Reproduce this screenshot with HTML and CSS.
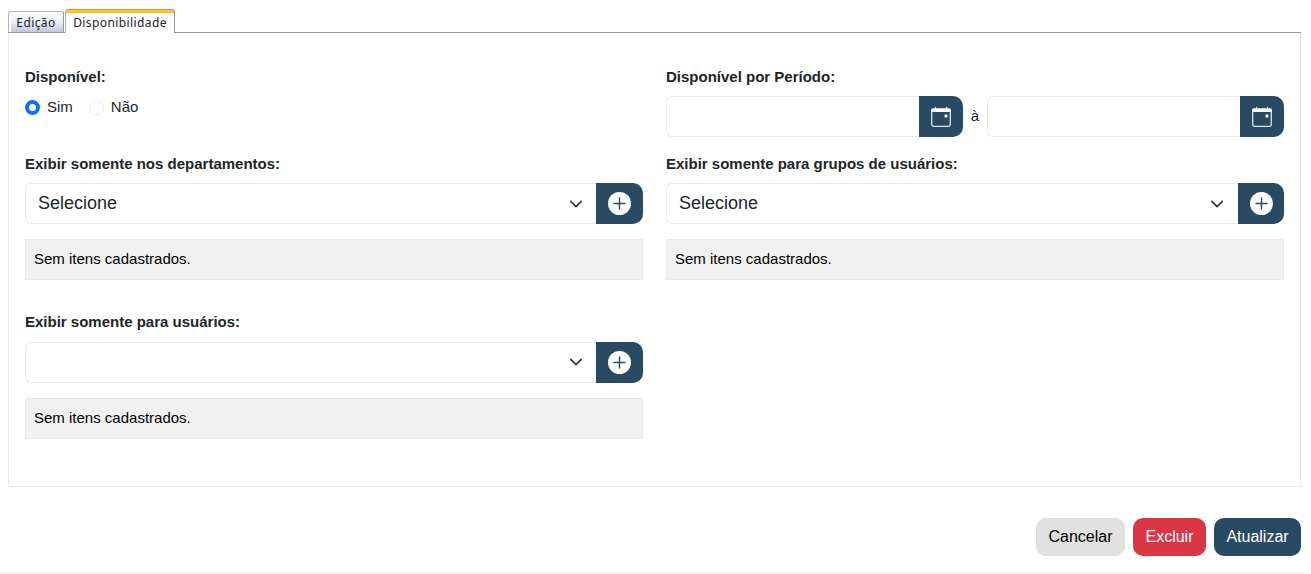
FILE: index.html
```html
<!DOCTYPE html>
<html lang="pt-br">
<head>
    <meta charset="UTF-8">
    <meta name="viewport" content="width=device-width, initial-scale=1.0">
    <title>Disponibilidade</title>
    <link rel="stylesheet" href="styles.css">
</head>
<body>

    <!-- Ícones reutilizados nos botões -->
    <svg class="icones" width="0" height="0">
        <symbol id="calendario" viewBox="0 0 20 22">
            <path d="M4.5 1v3M15.5 1v3" stroke="currentColor" stroke-width="1.2"/>
            <path d="M.7 5v13.6Q.7 20.4 2.5 20.4H17.5Q19.3 20.4 19.3 18.6V5" fill="none" stroke="currentColor" stroke-opacity=".85" stroke-width="1.3"/>
            <path d="M0 6V4Q0 2.2 1.8 2.2H18.2Q20 2.2 20 4V6z" fill="currentColor"/>
            <rect x="13.6" y="8.6" width="2.8" height="2.8" rx=".7" fill="currentColor"/>
        </symbol>
        <symbol id="mais" viewBox="0 0 23 23">
            <circle cx="11.5" cy="11.5" r="11.5" fill="currentColor"/>
            <path d="M11.5 6v11M6 11.5h11" stroke="#284b63" stroke-width="1.4" stroke-linecap="round"/>
        </symbol>
        <symbol id="seta" viewBox="0 0 16 16">
            <path d="M2 5l6 6 6-6" fill="none" stroke="#343a40" stroke-width="2" stroke-linecap="round" stroke-linejoin="round"/>
        </symbol>
    </svg>

    <div class="container">
        <div class="tabs">
            <div class="tab">Edição</div>
            <div class="tab ativa">Disponibilidade</div>
        </div>

        <div class="painel">
            <div class="campo">
                <div class="titulo">Disponível:</div>
                <div class="opcoes">
                    <label class="opcao"><input type="radio" name="disponivel" checked>Sim</label>
                    <label class="opcao"><input type="radio" name="disponivel">Não</label>
                </div>
            </div>

            <div class="campo">
                <div class="titulo">Disponível por Período:</div>
                <div class="periodo">
                    <div class="grupo">
                        <input type="text" class="entrada">
                        <button class="botao-data"><svg width="20" height="22"><use href="#calendario"/></svg></button>
                    </div>
                    <span class="ate">à</span>
                    <div class="grupo">
                        <input type="text" class="entrada">
                        <button class="botao-data"><svg width="20" height="22"><use href="#calendario"/></svg></button>
                    </div>
                </div>
            </div>

            <div class="campo">
                <div class="titulo">Exibir somente nos departamentos:</div>
                <div class="grupo">
                    <div class="entrada selecao">Selecione<svg width="14" height="14"><use href="#seta"/></svg></div>
                    <button class="botao-mais"><svg width="23" height="23"><use href="#mais"/></svg></button>
                </div>
                <div class="vazio">Sem itens cadastrados.</div>
            </div>

            <div class="campo grupos">
                <div class="titulo">Exibir somente para grupos de usuários:</div>
                <div class="grupo">
                    <div class="entrada selecao">Selecione<svg width="14" height="14"><use href="#seta"/></svg></div>
                    <button class="botao-mais"><svg width="23" height="23"><use href="#mais"/></svg></button>
                </div>
                <div class="vazio">Sem itens cadastrados.</div>
            </div>

            <div class="campo usuarios">
                <div class="titulo">Exibir somente para usuários:</div>
                <div class="grupo">
                    <div class="entrada selecao"><svg width="14" height="14"><use href="#seta"/></svg></div>
                    <button class="botao-mais"><svg width="23" height="23"><use href="#mais"/></svg></button>
                </div>
                <div class="vazio">Sem itens cadastrados.</div>
            </div>
        </div>

        <div class="acoes">
            <button class="btn cancelar">Cancelar</button>
            <button class="btn excluir">Excluir</button>
            <button class="btn atualizar">Atualizar</button>
        </div>
    </div>

</body>
</html>
```
FILE: styles.css
```css
* {
    box-sizing: border-box;
    margin: 0;
    padding: 0;
}

body {
    height: 574px;
    overflow: hidden;
    background-color: #f8f8f8;
    color: #212529;
    font-family: "Liberation Sans", Arial, sans-serif;
    font-size: 15px;
}

.icones {
    display: block;
}

.container {
    height: 573px;
    padding: 9px 10px 0 8px;
    background-color: #fff;
    border-bottom: 1px solid #ececec;
    border-bottom-right-radius: 8px;
}

.tabs {
    display: flex;
    align-items: flex-end;
    height: 24px;
    border-bottom: 1px solid #919b9c;
}

.tab {
    height: 21px;
    width: 56px;
    border: 1px solid #919b9c;
    border-top-color: #a9b8bf;
    border-left-color: #a9b8bf;
    border-bottom: none;
    border-radius: 3px 3px 0 0;
    background: linear-gradient(#fff, #ececf5 50%, #c5c5dc);
    box-shadow: inset 2px 0 #fff;
    color: #212529;
    font-family: "Noto Sans", sans-serif;
    font-size: 12px;
    letter-spacing: .4px;
    line-height: 21px;
    text-align: center;
    white-space: nowrap;
}

.tab.ativa {
    width: 110px;
    height: 24px;
    margin: 0 0 -1px 1px;
    border-top: 1px solid #e5912d;
    background: #fff;
    box-shadow: inset 0 3px #ffc02f;
    line-height: 25px;
}

.painel {
    display: grid;
    grid-template-columns: 618px 618px;
    grid-template-rows: 87px 158px auto;
    column-gap: 23px;
    height: 454px;
    padding: 35px 16px 0;
    border: 1px solid #e9e9e9;
    border-top: none;
}

.titulo {
    height: 28px;
    font-size: 15px;
    font-weight: bold;
    line-height: 18px;
}

.usuarios .titulo {
    height: 29px;
}

.opcoes {
    display: flex;
    gap: 16px;
    padding-top: 2px;
}

.opcao {
    display: flex;
    align-items: center;
    gap: 7px;
    height: 18px;
    line-height: 16px;
}

.opcao input {
    appearance: none;
    width: 15px;
    height: 15px;
    border: 1px solid #e9e9e9;
    border-radius: 50%;
    background-color: #fff;
}

.opcao input:checked {
    border: 4px solid #0d6efd;
}

.periodo {
    display: flex;
}

.periodo .grupo {
    width: 297px;
}

.ate {
    width: 24px;
    line-height: 40px;
    text-align: center;
}

.grupo {
    display: flex;
    height: 41px;
}

.entrada {
    flex: 1;
    min-width: 0;
    border: 1px solid #e9e9e9;
    border-right: none;
    border-radius: 6px 0 0 6px;
    background-color: #fff;
}

.selecao {
    display: flex;
    align-items: center;
    padding: 0 13px 0 12px;
    font-size: 18px;
}

.selecao svg {
    margin-left: auto;
}

.usuarios .selecao {
    padding-bottom: 1px;
}

.botao-data,
.botao-mais {
    display: flex;
    justify-content: center;
    align-items: center;
    width: 44px;
    border: none;
    border-radius: 0 10px 10px 0;
    background-color: #284b63;
    color: #fff;
    cursor: pointer;
}

.botao-mais {
    width: 47px;
}

.grupos .botao-mais {
    width: 46px;
}

.grupos .selecao {
    padding-right: 14px;
}

.vazio {
    height: 41px;
    margin-top: 15px;
    padding-left: 8px;
    border: 1px solid #e9e9e9;
    background-color: #f1f1f1;
    color: #000;
    line-height: 37px;
}

.acoes {
    display: flex;
    justify-content: flex-end;
    gap: 8px;
    margin-top: 31px;
}

.btn {
    height: 38px;
    border: 1px solid transparent;
    border-radius: 10px;
    color: #fff;
    font-family: inherit;
    font-size: 16px;
    cursor: pointer;
}

.cancelar {
    width: 89px;
    border-color: #d9dcea;
    background-color: #e1e1e1;
    color: #000;
}

.excluir {
    width: 73px;
    background-color: #dc3545;
}

.atualizar {
    width: 87px;
    background-color: #284b63;
}
```
